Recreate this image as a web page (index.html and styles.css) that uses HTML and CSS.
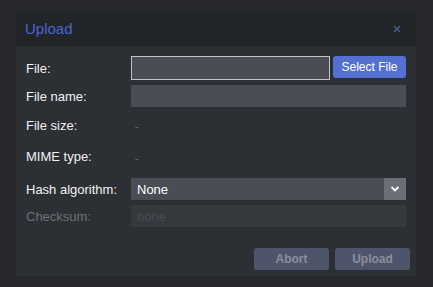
FILE: index.html
```html
<!DOCTYPE html>
<html>
<head>
<meta charset="utf-8">
<link rel="stylesheet" href="styles.css">
</head>
<body>
<div class="dialog">
  <div class="header">
    <span class="title">Upload</span>
    <span class="close">
      <svg width="8" height="8" viewBox="0 0 8 8"><path d="M1 1L7 7M7 1L1 7" stroke="#4b5a8e" stroke-width="1.6" fill="none"/></svg>
    </span>
  </div>
  <div class="body">
    <div class="row r-file">
      <label class="lbl">File:</label>
      <div class="file-box"></div>
      <button class="btn-select">Select File</button>
    </div>
    <div class="row r-input">
      <label class="lbl">File name:</label>
      <div class="input"></div>
    </div>
    <div class="row r-static">
      <label class="lbl">File size:</label>
      <span class="dash">-</span>
    </div>
    <div class="row r-static r-mime">
      <label class="lbl">MIME type:</label>
      <span class="dash">-</span>
    </div>
    <div class="row r-input">
      <label class="lbl">Hash algorithm:</label>
      <div class="select">
        <span class="select-text">None</span>
        <span class="select-arrow">
          <svg width="10" height="6" viewBox="0 0 10 6"><path d="M1.5 1L5 4.5L8.5 1" stroke="#ffffff" stroke-width="1.8" fill="none"/></svg>
        </span>
      </div>
    </div>
    <div class="row r-input">
      <label class="lbl dim">Checksum:</label>
      <div class="input disabled"><span class="placeholder">none</span></div>
    </div>
    <div class="footer">
      <button class="btn-action">Abort</button>
      <button class="btn-action">Upload</button>
    </div>
  </div>
</div>
</body>
</html>
```
FILE: styles.css
```css
html, body {
  margin: 0;
  padding: 0;
  background: #26282c;
  font-family: "Liberation Sans", Arial, sans-serif;
}
body {
  padding: 12px 17px 11px 16px;
  width: 400px;
}
.dialog {
  width: 400px;
  background: #2c2f34;
}
.header {
  height: 34px;
  background: #212428;
  display: flex;
  align-items: center;
  justify-content: space-between;
  padding: 0 15px 0 9px;
}
.title {
  color: #4a66d0;
  font-size: 15px;
  margin-top: -1px;
}
.close {
  display: flex;
  margin-top: -1px;
}
.body {
  padding: 10px 6px 6px 10px;
  display: flex;
  flex-direction: column;
  gap: 5px;
}
.row {
  display: flex;
  align-items: center;
  padding-right: 4px;
}
.lbl {
  width: 105px;
  flex: none;
  color: #f2f2f2;
  font-size: 13px;
}
.lbl.dim {
  color: #6e7178;
}
.r-file {
  height: 24px;
}
.file-box {
  box-sizing: border-box;
  width: 199px;
  height: 24px;
  background: #4a4d55;
  border: 1px solid #c4c4c4;
}
.btn-select {
  margin-left: 3px;
  width: 73px;
  height: 22px;
  align-self: flex-start;
  border: none;
  border-radius: 3px;
  background: #5470d3;
  color: #ffffff;
  font-family: "Liberation Sans", Arial, sans-serif;
  font-size: 12px;
  padding: 0;
}
.r-input {
  height: 22px;
}
.input {
  flex: 1;
  height: 22px;
  background: #4a4d55;
  display: flex;
  align-items: center;
}
.input.disabled {
  background: #35383d;
}
.placeholder {
  color: #494c52;
  font-size: 13px;
  padding-left: 6px;
}
.r-static {
  height: 26px;
}
.r-mime {
  height: 27px;
  margin-bottom: 3px;
}
.dash {
  color: #73767c;
  font-size: 10px;
  padding-left: 4px;
  margin-top: 3px;
}
.select {
  flex: 1;
  height: 22px;
  background: #4a4d55;
  display: flex;
  align-items: center;
}
.select-text {
  flex: 1;
  color: #ffffff;
  font-size: 13px;
  padding-left: 6px;
}
.select-arrow {
  width: 22px;
  height: 22px;
  background: #6c6f76;
  display: flex;
  align-items: center;
  justify-content: center;
}
.footer {
  display: flex;
  justify-content: flex-end;
  gap: 6px;
  margin-top: 16px;
}
.btn-action {
  width: 75px;
  height: 22px;
  border: none;
  border-radius: 3px;
  background: #4e556b;
  color: #8a8f9c;
  font-family: "Liberation Sans", Arial, sans-serif;
  font-weight: bold;
  font-size: 12px;
  padding: 0;
}
```
